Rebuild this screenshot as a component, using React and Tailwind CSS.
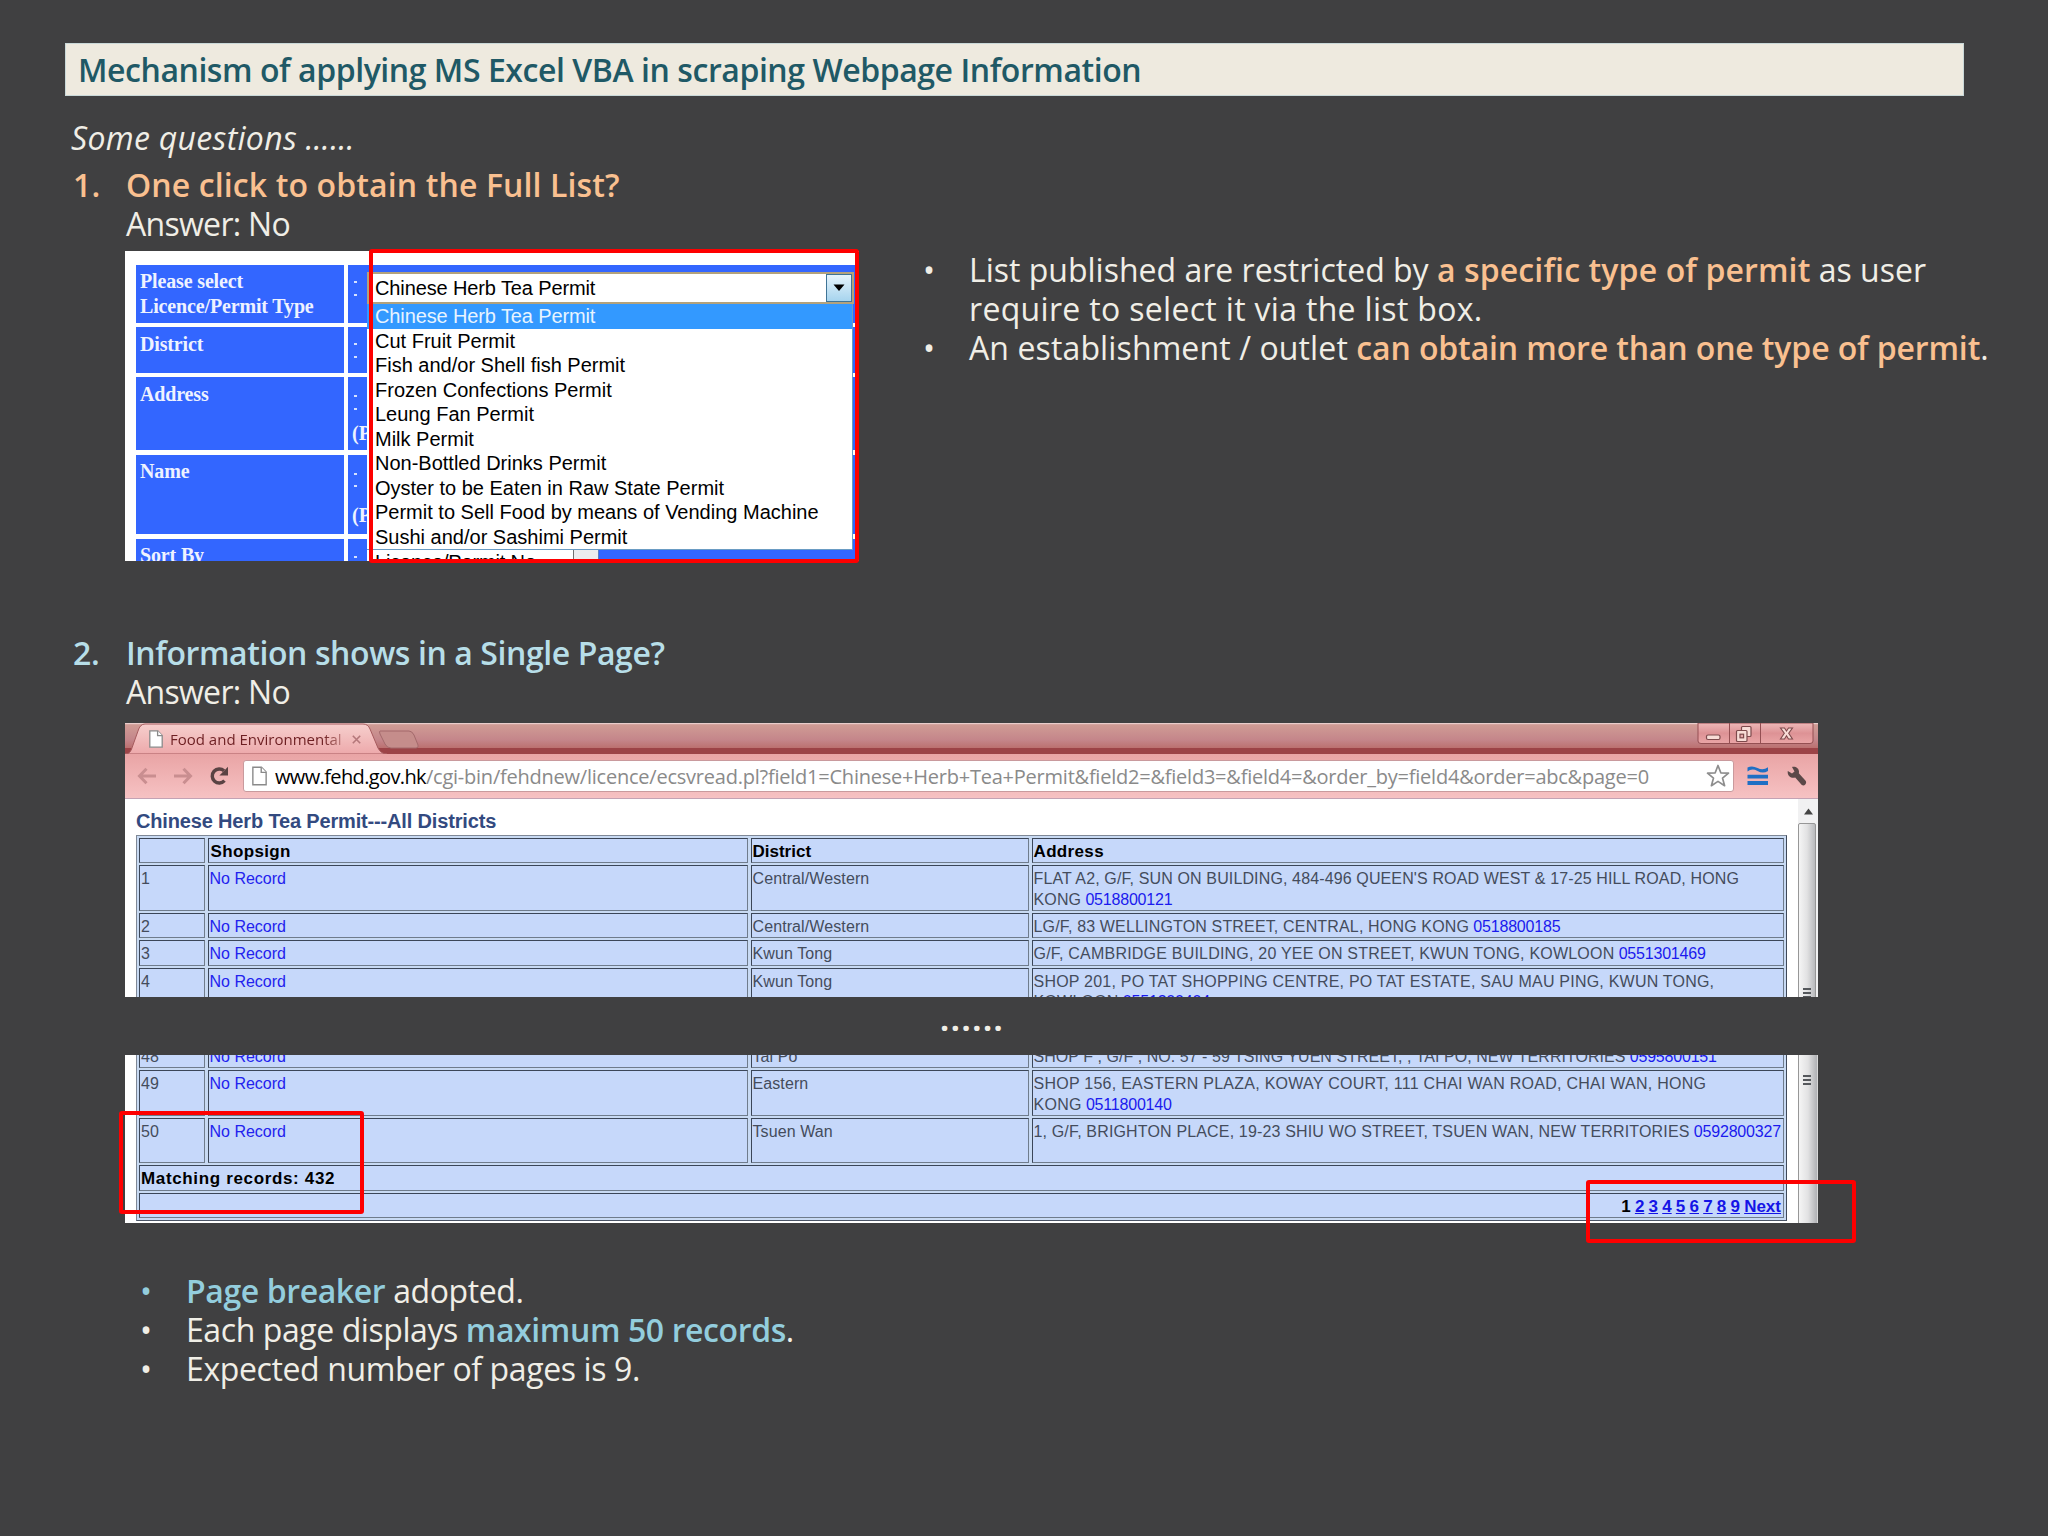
import clsx from "clsx";

const permits = [
  "Chinese Herb Tea Permit",
  "Cut Fruit Permit",
  "Fish and/or Shell fish Permit",
  "Frozen Confections Permit",
  "Leung Fan Permit",
  "Milk Permit",
  "Non-Bottled Drinks Permit",
  "Oyster to be Eaten in Raw State Permit",
  "Permit to Sell Food by means of Vending Machine",
  "Sushi and/or Sashimi Permit",
];

const formRows = [
  { label: ["Please select", "Licence/Permit Type"], height: "h-[57.6px]", colon: "pt-[16px]" },
  { label: ["District"], height: "h-[45.6px]", colon: "pt-[16px]" },
  { label: ["Address"], height: "h-[73px]", colon: "pt-[18px]", note: "pt-[11px]" },
  { label: ["Name"], height: "h-[79px]", colon: "pt-[18px]", note: "pt-[16px]" },
  { label: ["Sort By"], height: "h-[40px]", colon: "pt-[17px]" },
];

const firstRows = [
  {
    no: 1,
    district: "Central/Western",
    lines: ["FLAT A2, G/F, SUN ON BUILDING, 484-496 QUEEN'S ROAD WEST & 17-25 HILL ROAD, HONG", "KONG"],
    phone: "0518800121",
    tall: true,
    tracking: "tracking-[0.13px]",
  },
  {
    no: 2,
    district: "Central/Western",
    lines: ["LG/F, 83 WELLINGTON STREET, CENTRAL, HONG KONG"],
    phone: "0518800185",
    tracking: "tracking-[0.16px]",
  },
  {
    no: 3,
    district: "Kwun Tong",
    lines: ["G/F, CAMBRIDGE BUILDING, 20 YEE ON STREET, KWUN TONG, KOWLOON"],
    phone: "0551301469",
    tracking: "tracking-[0.21px]",
  },
  {
    no: 4,
    district: "Kwun Tong",
    lines: ["SHOP 201, PO TAT SHOPPING CENTRE, PO TAT ESTATE, SAU MAU PING, KWUN TONG,", "KOWLOON"],
    phone: "0551300404",
    tall: true,
    tracking: "tracking-[0.22px]",
  },
];

const lastRows = [
  {
    no: 48,
    district: "Tai Po",
    lines: ["SHOP F , G/F , NO. 57 - 59 TSING YUEN STREET, , TAI PO, NEW TERRITORIES"],
    phone: "0595800151",
    tracking: "tracking-[0.04px]",
  },
  {
    no: 49,
    district: "Eastern",
    lines: ["SHOP 156, EASTERN PLAZA, KOWAY COURT, 111 CHAI WAN ROAD, CHAI WAN, HONG", "KONG"],
    phone: "0511800140",
    tall: true,
    tracking: "tracking-[0.26px]",
  },
  {
    no: 50,
    district: "Tsuen Wan",
    lines: ["1, G/F, BRIGHTON PLACE, 19-23 SHIU WO STREET, TSUEN WAN, NEW TERRITORIES"],
    phone: "0592800327",
    tall: true,
    tracking: "tracking-[0.16px]",
  },
];

const pages = [2, 3, 4, 5, 6, 7, 8, 9];

function Question({ number, title, className }) {
  return (
    <div className="flex pl-[73px]">
      <span className={clsx("w-[53px] font-semibold", className)}>{number}.</span>
      <div>
        <h2 className={clsx("font-semibold", className)}>{title}</h2>
        <p className="tracking-[-0.7px]">Answer: No</p>
      </div>
    </div>
  );
}

function Bullet({ children, color }) {
  return (
    <li className="flex">
      <span className={clsx("w-[46px] shrink-0", color)}>•</span>
      <div>{children}</div>
    </li>
  );
}

function RedBox({ className }) {
  return <div className={clsx("absolute rounded-[3px] border-4 border-[#fe0000]", className)} />;
}

function Colon({ className }) {
  return (
    <div className={clsx("flex flex-col gap-[10.5px] pl-[6px]", className)}>
      <span className="h-[2px] w-[3px] bg-[#d5e0ff]" />
      <span className="h-[2px] w-[3px] bg-[#d5e0ff]" />
    </div>
  );
}

function PermitForm() {
  return (
    <div className="relative mt-px h-[310px] w-[734px] font-['Liberation_Sans',sans-serif] text-[20px] text-black">
      <div className="relative h-full overflow-hidden bg-white pl-[11px] pt-[14px]">
        <div className="flex flex-col gap-[4.6px] font-['Liberation_Serif',serif] text-[20px] font-bold leading-[24.5px] text-[#eef2ff]">
          {formRows.map((row) => (
            <div key={row.label[0]} className={clsx("flex shrink-0 gap-[4.5px]", row.height)}>
              <div className="w-[207.5px] bg-[#3366ff] pl-[4px] pt-[4.4px] tracking-[-0.15px]">
                {row.label.map((line) => (
                  <div key={line}>{line}</div>
                ))}
              </div>
              <div className="w-[507px] bg-[#3366ff]">
                <Colon className={row.colon} />
                {row.note && <div className={clsx("pl-[4px]", row.note)}>(P</div>}
              </div>
            </div>
          ))}
        </div>

        {/* Open list box */}
        <div className="absolute left-[242px] top-[21px] w-[487px]">
          <div className="flex h-[32px] items-center border-2 border-[#b3a27c] bg-white pl-[6px]">
            <span className="flex-1 leading-[28px] tracking-[-0.12px]">Chinese Herb Tea Permit</span>
            <span className="flex h-[28px] w-[26px] items-center justify-center border border-[#3f7496] bg-gradient-to-b from-[#e6f4fc] to-[#a6d4ee]">
              <svg width="12" height="8" viewBox="0 0 12 8">
                <path d="M0.5 0.5h11L6 7z" fill="#000" />
              </svg>
            </span>
          </div>
          <ul className="w-[486px] border-b border-r border-[#6a9cc4] bg-white leading-[24.5px]">
            {permits.map((permit, index) => (
              <li
                key={permit}
                className={clsx("pl-[8px]", index === 0 && "bg-[#3399ff] tracking-[-0.12px] text-[#e8f4ff]")}
              >
                {permit}
              </li>
            ))}
          </ul>
          <div className="flex h-[24px] w-[232px] border-r border-[#5a7fc0] bg-white">
            <span className="flex-1 pl-[8px] leading-[25px] tracking-[-0.15px]">Licence/Permit No.</span>
            <span className="w-[25px] border-l border-[#707070] bg-[#ececee]" />
          </div>
        </div>
      </div>
      <RedBox className="-top-[2px] left-[244px] h-[314px] w-[490px]" />
    </div>
  );
}

function Cell({ className, children }) {
  return (
    <div
      className={clsx(
        "shrink-0 whitespace-nowrap border border-b-[#6f7c8c] border-l-[#3b4658] border-r-[#6f7c8c] border-t-[#3b4658] bg-[#c6d8fa] pl-px pt-[3px]",
        className
      )}
    >
      {children}
    </div>
  );
}

function Record({ record }) {
  const last = record.lines.length - 1;
  return (
    <div className={clsx("flex shrink-0 gap-[2.5px]", record.tall ? "h-[45.3px]" : "h-[25.3px]")}>
      <Cell className="w-[66px]">{record.no}</Cell>
      <Cell className="w-[540.5px] text-[#2222ee]">No Record</Cell>
      <Cell className="w-[278.5px] tracking-[0.1px]">{record.district}</Cell>
      <Cell className={clsx("w-[752px]", record.tracking)}>
        {record.lines.map((line, index) => (
          <div key={line}>
            {line}
            {index === last && <span className="tracking-[-0.2px] text-[#1a1aee]"> {record.phone}</span>}
          </div>
        ))}
      </Cell>
    </div>
  );
}

function Table({ className, children }) {
  return (
    <div
      className={clsx(
        "flex w-[1651px] flex-col gap-[2.2px] border border-b-[#4b5566] border-l-[#7f8896] border-r-[#3f495a] border-t-[#7f8896] bg-[#c8daf3] p-[2px] text-[16px] leading-[20.3px] text-[#444c5c]",
        className
      )}
    >
      {children}
    </div>
  );
}

function Grip() {
  return (
    <div className="flex flex-col gap-[2px]">
      <span className="h-[2px] w-[8px] bg-[#55585c]" />
      <span className="h-[2px] w-[8px] bg-[#55585c]" />
      <span className="h-[2px] w-[8px] bg-[#55585c]" />
    </div>
  );
}

function PageIcon({ className }) {
  return (
    <svg className={className} viewBox="0 0 14 18" fill="#fff" stroke="#8a8a8a" strokeWidth="1.3">
      <path d="M0.8 0.8h8l4.4 4.6v11.8H0.8z" />
      <path d="M8.6 0.8v4.8h4.6" />
    </svg>
  );
}

function TabStrip() {
  return (
    <div className="relative h-[31px] bg-gradient-to-b from-[#d09c95] from-5% via-[#c4858a] via-55% to-[#b4605c]">
      <svg className="absolute inset-0" width="1693" height="31" viewBox="0 0 1693 31">
        <defs>
          <linearGradient id="tab" x1="0" y1="0" x2="0" y2="1">
            <stop offset="0" stopColor="#f6cfcd" />
            <stop offset="1" stopColor="#eda9ab" />
          </linearGradient>
          <linearGradient id="button" x1="0" y1="0" x2="0" y2="1">
            <stop offset="0" stopColor="#eeb9b8" />
            <stop offset="0.5" stopColor="#dd9295" />
            <stop offset="1" stopColor="#eaa5a6" />
          </linearGradient>
        </defs>
        <rect y="25" width="1693" height="6" fill="#9c4347" />
        <rect y="0" width="1693" height="1.2" fill="#e9cdcb" />
        <path d="M0 31C5 31 6 28 8 22L13 8Q15 1 20 1H238Q243 1 245 6L253 25Q256 31 262 31Z" fill="url(#tab)" stroke="#a65b5e" strokeWidth="1" />
        <path d="M255 8H284Q287 8 289 12L293 22Q294 25 291 25H266Q262 25 260 21L255 11Q254 8 255 8Z" fill="#c58d8b" stroke="#a3696b" />
        {/* Window buttons */}
        <path d="M1573 0H1688V18Q1688 20.5 1685 20.5H1576Q1573 20.5 1573 18Z" fill="url(#button)" stroke="#944f52" />
        <path d="M1604.5 0V20M1635.5 0V20" stroke="#944f52" />
        <rect x="1581.5" y="12" width="13.500" height="4.500" rx="1.5" fill="#f8dcd6" stroke="#7d4a4c" strokeWidth="1.2" />
        <rect x="1616.500" y="3.500" width="9.500" height="10" rx="1" fill="#f8dcd6" stroke="#7d4a4c" strokeWidth="1.2" />
        <rect x="1611.500" y="7.500" width="10.500" height="11" rx="1" fill="#f8dcd6" stroke="#7d4a4c" strokeWidth="1.2" />
        <rect x="1615" y="11.200" width="3.600" height="3.600" fill="#e8a9aa" stroke="#7d4a4c" strokeWidth="1.2" />
        <path
          d="M1655.5 5h4l2 3 2-3h4l-3.8 5.3 3.800 5.700h-4l-2-3.200-2 3.200h-4l3.800-5.700z"
          fill="#f8dcd6"
          stroke="#7d4a4c"
          strokeWidth="1.1"
        />
      </svg>
      <div className="relative flex h-[32px] items-center pl-[24px]">
        <PageIcon className="h-[18px] w-[14px]" />
        <span className="ml-[7px] w-[174px] bg-gradient-to-r from-[#6d1f22] from-88% to-[#c98a8b] bg-clip-text font-['Open_Sans',sans-serif] text-[15px] leading-[20px] text-transparent">
          Food and Environmental
        </span>
        <svg className="ml-[8px]" width="9" height="9" viewBox="0 0 9 9" stroke="#b4777a" strokeWidth="1.6">
          <path d="M0.8 0.8l7.4 7.4M8.2 0.8L0.8 8.2" />
        </svg>
      </div>
    </div>
  );
}

function Toolbar() {
  return (
    <div className="flex h-[45px] items-center border-b border-[#c3a3b4] bg-gradient-to-b from-[#e9a4a5] to-[#f6c2c3] pl-[12px]">
      <svg width="20" height="18" viewBox="0 0 20 18" fill="none" stroke="#c98e90" strokeWidth="3">
        <path d="M19 9H3M9.5 1.8L2.5 9l7 7.2" />
      </svg>
      <svg className="ml-[16px]" width="20" height="18" viewBox="0 0 20 18" fill="none" stroke="#c98e90" strokeWidth="3">
        <path d="M1 9h16M10.5 1.8L17.5 9l-7 7.2" />
      </svg>
      <svg className="ml-[16px]" width="20" height="20" viewBox="0 0 20 20" fill="none">
        <path d="M15.5 14.6A7 7 0 1 1 15 4.8" stroke="#5a4344" strokeWidth="3.4" />
        <path d="M19 0.8v8.6h-8.6z" fill="#5a4344" />
      </svg>
      <div className="ml-[14px] flex h-[32px] w-[1491px] items-center rounded-[3px] border border-[#c99a9d] bg-white pl-[8px] pr-[3px]">
        <PageIcon className="h-[20px] w-[15px]" />
        <div className="ml-[8px] flex-1 whitespace-nowrap pt-px font-['Open_Sans',sans-serif] text-[20px] leading-[30px] tracking-[-0.23px] text-[#8a8a8a]">
          <span className="tracking-[-0.63px] text-black">www.fehd.gov.hk</span>
          /cgi-bin/fehdnew/licence/ecsvread.pl?field1=Chinese+Herb+Tea+Permit&amp;field2=&amp;field3=&amp;field4=&amp;order_by=field4&amp;order=abc&amp;page=0
        </div>
        <svg width="24" height="24" viewBox="0 0 24 24" fill="#fff" stroke="#8d8d8d" strokeWidth="1.7" strokeLinejoin="round">
          <path d="M12 1.5l2.8 7.3 7.7 .4-6 4.9 2.1 7.6L12 17.4l-6.6 4.3 2.1-7.6-6-4.9 7.7-.4z" />
        </svg>
      </div>
      <svg className="ml-[13px]" width="22" height="20" viewBox="0 0 22 20">
        <path d="M0.500 1.600Q5 -1 10.500 2T21 1.300V5Q16 8 10.500 5T0.500 5.400Z" fill="#1f6fc4" />
        <path d="M0.500 8.800h20.500v3.700H0.500zM0.500 15h20.500v4H0.500z" fill="#1f6fc4" />
      </svg>
      <svg className="ml-[18px]" width="20" height="21" viewBox="0 0 20 21">
        <path
          d="M0.800 5L5 7.500 7.500 5.500 5 1C9 0 13 3 11.800 7.300L18.600 14.800C20.300 17.500 17.500 20.600 14.800 19L8.200 11.500C4 12.800 0 9.500 0.800 5Z"
          fill="#5b4848"
        />
      </svg>
    </div>
  );
}

function Browser() {
  return (
    <div className="h-[274px] w-[1693px] overflow-hidden bg-white font-['Liberation_Sans',sans-serif]">
      <TabStrip />
      <Toolbar />
      <div className="flex">
        <div className="flex-1 pl-[11px] pt-[8px]">
          <h3 className="text-[20px] font-bold leading-[28px] tracking-[-0.16px] text-[#334a80]">
            Chinese Herb Tea Permit---All Districts
          </h3>
          <Table>
            <div className="flex h-[25.3px] gap-[2.5px] text-[17px] font-bold text-black">
              <Cell className="w-[66px]" />
              <Cell className="w-[540.5px] tracking-[0.35px]">
                <span className="ml-px">Shopsign</span>
              </Cell>
              <Cell className="w-[278.5px]">District</Cell>
              <Cell className="w-[752px] tracking-[0.35px]">Address</Cell>
            </div>
            {firstRows.map((record) => (
              <Record key={record.no} record={record} />
            ))}
          </Table>
        </div>
        <div className="flex h-[198px] w-[20px] flex-col overflow-hidden bg-[#f1f1f2]">
          <svg className="ml-[6px] mt-[9px] shrink-0" width="9" height="7" viewBox="0 0 9 7">
            <path d="M0 6.500L4.500 .5 9 6.500z" fill="#444" />
          </svg>
          <div className="mt-[8px] flex h-[240px] w-[18px] shrink-0 justify-center rounded-t-[2px] border border-[#979797] bg-gradient-to-r from-[#f5f5f5] via-[#e2e2e3] to-[#b9babd] pt-[164px]">
            <Grip />
          </div>
        </div>
      </div>
    </div>
  );
}

function BrowserBottom() {
  return (
    <div className="relative w-[1693px] font-['Liberation_Sans',sans-serif]">
      <div className="flex h-[168px] overflow-hidden bg-white">
        <div className="flex-1 pl-[11px]">
          <Table className="-mt-[15px]">
            {lastRows.map((record) => (
              <Record key={record.no} record={record} />
            ))}
            <Cell className="h-[25.3px] text-[17px] font-bold tracking-[0.65px] text-black">Matching records: 432</Cell>
            <Cell className="flex h-[25.3px] justify-end gap-[4.2px] pr-[2px] text-[17px] font-bold text-black">
              <span>1</span>
              {pages.map((page) => (
                <a key={page} className="text-[#1414e6] underline">
                  {page}
                </a>
              ))}
              <a className="text-[#1414e6] underline">Next</a>
            </Cell>
          </Table>
        </div>
        <div className="flex w-[20px] justify-center border-l border-r border-l-[#979797] border-r-[#d8d8d8] bg-gradient-to-r from-[#f5f5f5] via-[#e2e2e3] to-[#b0b1b4] pr-[2px] pt-[20px]">
          <Grip />
        </div>
      </div>
      <RedBox className="-left-[6px] top-[56px] h-[103px] w-[245px]" />
      <RedBox className="left-[1461px] top-[125px] h-[63px] w-[270px]" />
    </div>
  );
}

export default function App() {
  return (
    <main className="h-[1536px] w-[2048px] overflow-hidden bg-[#404041] pt-[43px] font-['Open_Sans',sans-serif] text-[32px] leading-[39px] text-[#f0eee6]">
      <h1 className="ml-[65px] h-[53px] w-[1899px] border border-[#c9d8d8] bg-[#eeeadf] pl-[12px] font-semibold leading-[52px] tracking-[-0.44px] text-[#1f5966]">
        Mechanism of applying MS Excel VBA in scraping Webpage Information
      </h1>

      <p className="mb-[8px] mt-[22px] pl-[71px] italic tracking-[0.3px]">Some questions ……</p>

      <Question number={1} title="One click to obtain the Full List?" className="tracking-[0.12px] text-[#fac090]" />
      <div className="mt-[7px] flex h-[383px] pl-[125px]">
        <PermitForm />
        <ul className="ml-[64px] whitespace-nowrap">
          <Bullet>
            List published are restricted by{" "}
            <b className="font-semibold tracking-[0.12px] text-[#fac090]">a specific type of permit</b> as user
            <br />
            <span className="tracking-[0.32px]">require to select it via the list box.</span>
          </Bullet>
          <Bullet>
            <span className="tracking-[0.12px]">An establishment / outlet </span>
            <b className="font-semibold tracking-[-0.13px] text-[#fac090]">can obtain more than one type of permit</b>.
          </Bullet>
        </ul>
      </div>

      <Question number={2} title="Information shows in a Single Page?" className="tracking-[-0.41px] text-[#b7dee8]" />
      <div className="mt-[12px] pl-[125px]">
        <Browser />
        <p className="h-[58px] pl-[815px] font-bold leading-[44px] tracking-[1.6px]">......</p>
        <BrowserBottom />
      </div>

      <ul className="mt-[48px] pl-[140px]">
        <Bullet color="text-[#93cddd]">
          <b className="font-semibold tracking-[-0.4px] text-[#93cddd]">Page breaker</b>
          <span className="tracking-[-0.4px]"> adopted.</span>
        </Bullet>
        <Bullet>
          <span className="tracking-[-0.42px]">Each page displays </span>
          <b className="font-semibold tracking-[-0.4px] text-[#93cddd]">maximum 50 records</b>.
        </Bullet>
        <Bullet>
          <span className="tracking-[-0.38px]">Expected number of pages is 9.</span>
        </Bullet>
      </ul>
    </main>
  );
}
